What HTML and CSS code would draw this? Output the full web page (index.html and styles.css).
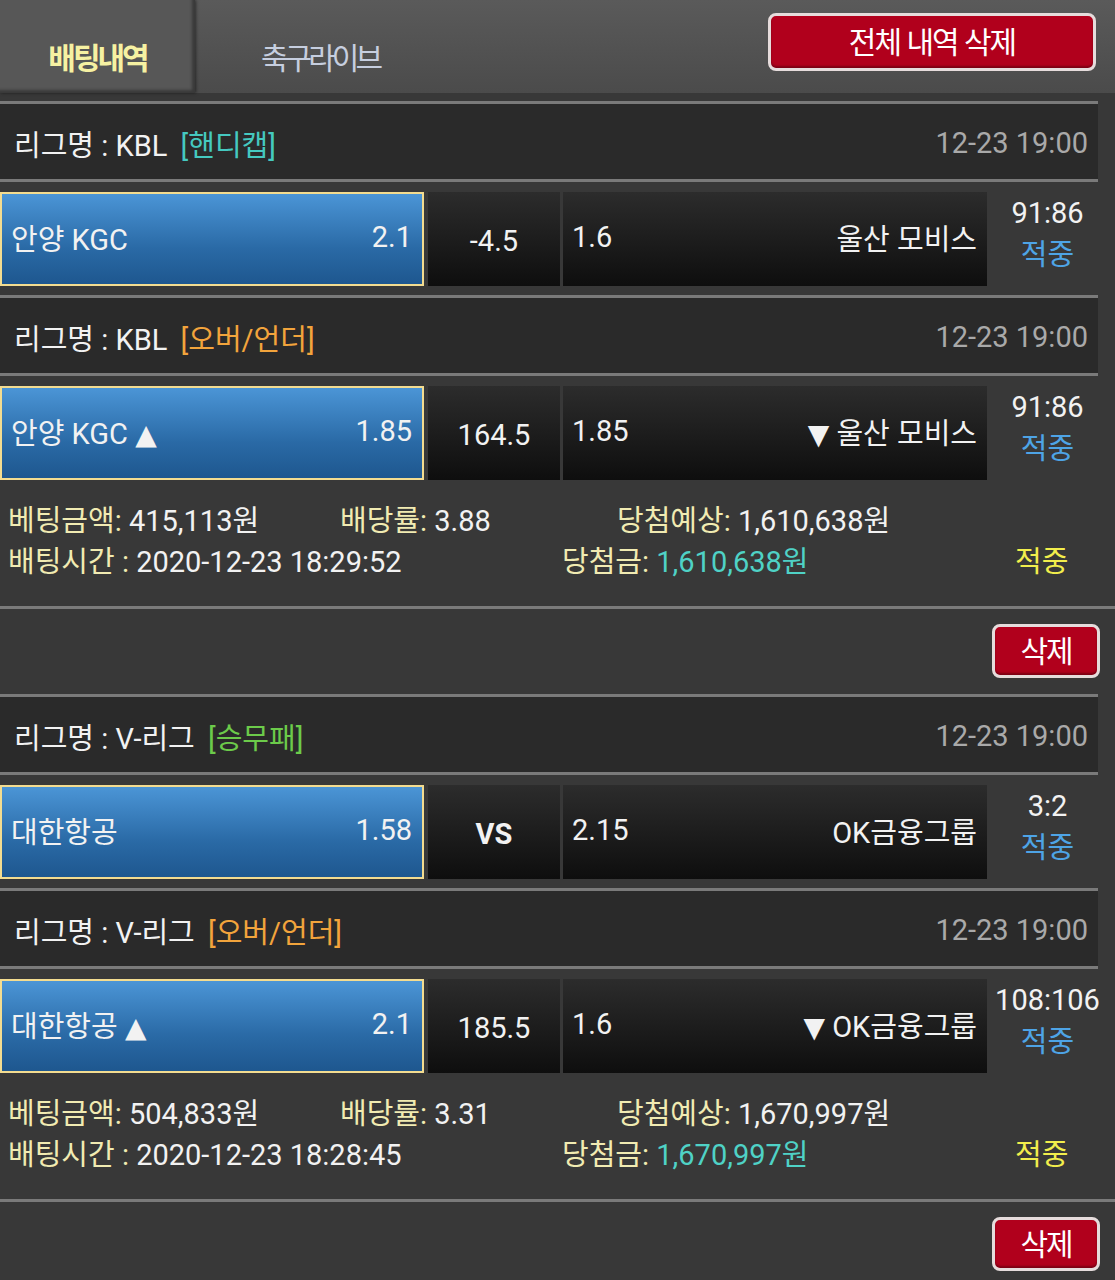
FILE: index.html
```html
<!DOCTYPE html>
<html lang="ko">
<head>
    <meta charset="UTF-8">
    <meta name="viewport" content="width=device-width, initial-scale=1.0">
    <title>배팅내역</title>
    <link rel="stylesheet" href="styles.css">
</head>
<body>
    <!-- 상단 탭 -->
    <div class="top-bar">
        <div class="tab active">배팅내역</div>
        <div class="tab">축구라이브</div>
        <button class="btn-red btn-all">전체 내역 삭제</button>
    </div>

    <!-- 배팅 1 -->
    <div class="bet">
        <div class="games">
            <div class="league">
                <span class="league-name">리그명 : KBL <span class="type teal">[핸디캡]</span></span>
                <span class="date">12-23 19:00</span>
            </div>
            <div class="match">
                <div class="team home"><span>안양 KGC</span><span>2.1</span></div>
                <div class="mid">-4.5</div>
                <div class="team away"><span>1.6</span><span>울산 모비스</span></div>
                <div class="result"><span class="score">91:86</span><span class="hit">적중</span></div>
            </div>
            <div class="league">
                <span class="league-name">리그명 : KBL <span class="type orange">[오버/언더]</span></span>
                <span class="date">12-23 19:00</span>
            </div>
            <div class="match">
                <div class="team home"><span>안양 KGC <i class="arrow">▲</i></span><span>1.85</span></div>
                <div class="mid">164.5</div>
                <div class="team away"><span>1.85</span><span><i class="arrow">▼</i> 울산 모비스</span></div>
                <div class="result"><span class="score">91:86</span><span class="hit">적중</span></div>
            </div>
        </div>
        <div class="info">
            <div class="info-row">
                <span class="c1"><em>베팅금액:</em> 415,113원</span>
                <span class="c2"><em>배당률:</em> 3.88</span>
                <span><em>당첨예상:</em> 1,610,638원</span>
            </div>
            <div class="info-row">
                <span class="c3"><em>배팅시간 :</em> 2020-12-23 18:29:52</span>
                <span class="c4"><em>당첨금:</em> <b class="win">1,610,638원</b></span>
                <span class="status">적중</span>
            </div>
        </div>
        <div class="del-bar"><button class="btn-red btn-del">삭제</button></div>
    </div>

    <!-- 배팅 2 -->
    <div class="bet">
        <div class="games">
            <div class="league">
                <span class="league-name">리그명 : V-리그 <span class="type green">[승무패]</span></span>
                <span class="date">12-23 19:00</span>
            </div>
            <div class="match">
                <div class="team home"><span>대한항공</span><span>1.58</span></div>
                <div class="mid vs">VS</div>
                <div class="team away"><span>2.15</span><span>OK금융그룹</span></div>
                <div class="result"><span class="score">3:2</span><span class="hit">적중</span></div>
            </div>
            <div class="league">
                <span class="league-name">리그명 : V-리그 <span class="type orange">[오버/언더]</span></span>
                <span class="date">12-23 19:00</span>
            </div>
            <div class="match">
                <div class="team home"><span>대한항공 <i class="arrow">▲</i></span><span>2.1</span></div>
                <div class="mid">185.5</div>
                <div class="team away"><span>1.6</span><span><i class="arrow">▼</i> OK금융그룹</span></div>
                <div class="result"><span class="score">108:106</span><span class="hit">적중</span></div>
            </div>
        </div>
        <div class="info">
            <div class="info-row">
                <span class="c1"><em>베팅금액:</em> 504,833원</span>
                <span class="c2"><em>배당률:</em> 3.31</span>
                <span><em>당첨예상:</em> 1,670,997원</span>
            </div>
            <div class="info-row">
                <span class="c3"><em>배팅시간 :</em> 2020-12-23 18:28:45</span>
                <span class="c4"><em>당첨금:</em> <b class="win">1,670,997원</b></span>
                <span class="status">적중</span>
            </div>
        </div>
        <div class="del-bar"><button class="btn-red btn-del">삭제</button></div>
    </div>
</body>
</html>
```

FILE: styles.css
```css
body {
    margin: 0;
    padding: 0;
    background: #383838;
    color: #f2f2f2;
    font-family: Roboto, "Noto Sans CJK KR", sans-serif;
    font-size: 29px;
    overflow: hidden;
}

/* 상단 탭 */
.top-bar {
    display: flex;
    height: 93px;
    background: linear-gradient(#5a5a5a, #4b4b4b);
    margin-bottom: 8px;
}

.tab {
    width: 250px;
    display: flex;
    align-items: center;
    justify-content: center;
    padding-top: 18px;
    box-sizing: border-box;
    font-family: "Noto Sans CJK KR", sans-serif;
    font-size: 30px;
    letter-spacing: -4px;
    color: #c6cedf;
}

.tab.active {
    width: 195px;
    background: #575757;
    color: #f6f1a2;
    font-weight: bold;
    letter-spacing: -3px;
    box-shadow: inset -3px -3px 3px rgba(0, 0, 0, 0.35), 1px 0 3px rgba(0, 0, 0, 0.5);
}

/* 빨간 버튼 */
.btn-red {
    background: #b1001c;
    border: 3px solid #e6dcdc;
    border-radius: 8px;
    color: #fff;
    font-family: "Noto Sans CJK KR", sans-serif;
    font-size: 30px;
    letter-spacing: -2px;
    padding: 0;
    box-shadow: inset 0 -2px 2px rgba(0, 0, 0, 0.3);
}

.btn-all {
    margin: 13px 19px 0 auto;
    width: 328px;
    height: 58px;
    padding-bottom: 4px;
}

/* 배팅 블록 */
.games {
    width: 1098px;
}

.league {
    height: 81px;
    box-sizing: border-box;
    background: #2a2a2a;
    border-top: 3px solid #7a7a7a;
    border-bottom: 3px solid #7a7a7a;
    display: flex;
    align-items: center;
    justify-content: space-between;
    padding: 3px 10px 0 14px;
}

.league-name .type {
    margin-left: 6px;
}

.teal { color: #45c9c0; }
.orange { color: #f2a43c; }
.green { color: #6ccb4a; }

.date {
    color: #a9a9a9;
}

.match {
    display: flex;
    height: 113px;
    padding-top: 10px;
    box-sizing: border-box;
}

.team {
    flex: none;
    width: 424px;
    height: 94px;
    box-sizing: border-box;
    display: flex;
    align-items: center;
    justify-content: space-between;
    padding: 0 10px 4px 9px;
}

.arrow {
    font-style: normal;
    font-family: "DejaVu Sans", sans-serif;
    font-size: 28px;
}

.home {
    background: linear-gradient(#4b95d6, #2a6aa6 60%, #1e578f);
    border: 2px solid #f3dc90;
}

.away {
    background: linear-gradient(#2c2c2c, #0e0e0e);
    margin-left: 3px;
}

.mid {
    flex: none;
    width: 132px;
    height: 94px;
    margin-left: 4px;
    background: linear-gradient(#2c2c2c, #0e0e0e);
    display: flex;
    align-items: center;
    justify-content: center;
    padding-top: 4px;
    box-sizing: border-box;
}

.vs {
    font-weight: bold;
}

.result {
    flex: none;
    width: 111px;
    display: flex;
    flex-direction: column;
    align-items: center;
    padding-left: 10px;
    box-sizing: border-box;
    white-space: nowrap;
    line-height: 42px;
}

.hit {
    color: #4ea4e6;
}

/* 정산 정보 */
.info {
    height: 120px;
    border-bottom: 3px solid #7a7a7a;
    padding: 12px 0 0 8px;
    box-sizing: border-box;
    line-height: 41px;
}

.info-row {
    display: flex;
}

.info em {
    font-style: normal;
    color: #f1ebb2;
}

.c1 { width: 332px; }
.c2 { width: 277px; }
.c3 { width: 554px; }
.c4 { width: 453px; }

.win {
    font-weight: normal;
    color: #4fd2c6;
}

.status {
    color: #f2ee4c;
}

.del-bar {
    height: 85px;
    display: flex;
    align-items: center;
    justify-content: flex-end;
    padding-right: 15px;
}

.btn-del {
    width: 108px;
    height: 54px;
    margin-top: -2px;
    padding-bottom: 3px;
}
```
